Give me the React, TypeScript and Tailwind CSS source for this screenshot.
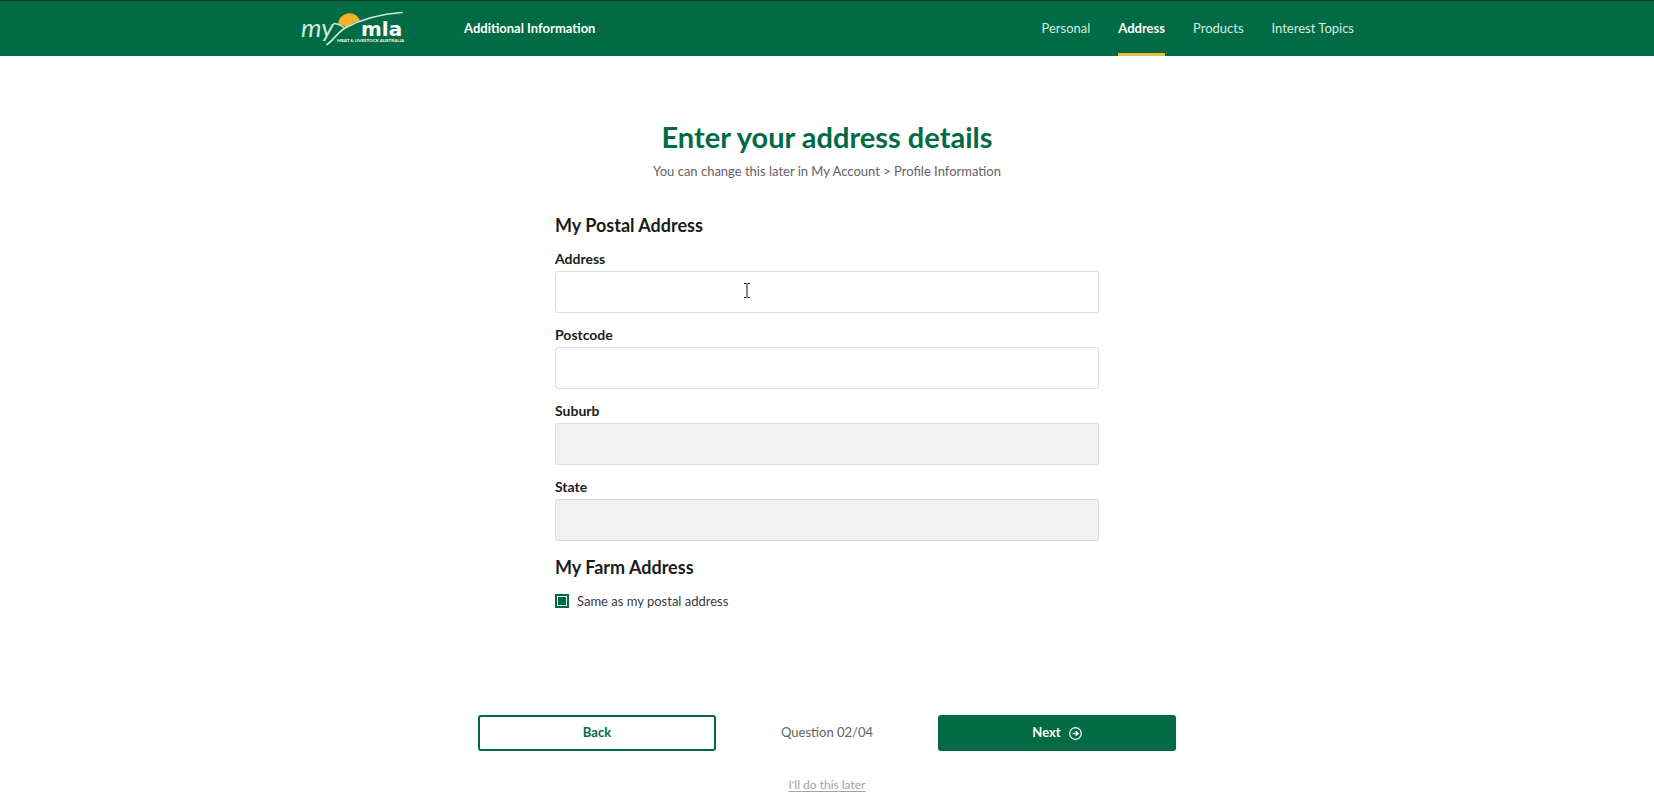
import React from 'react';

const steps = [
  { label: 'Personal', active: false },
  { label: 'Address', active: true },
  { label: 'Products', active: false },
  { label: 'Interest Topics', active: false },
];

const fields = [
  { id: 'address', label: 'Address', disabled: false },
  { id: 'postcode', label: 'Postcode', disabled: false },
  { id: 'suburb', label: 'Suburb', disabled: true },
  { id: 'state', label: 'State', disabled: true },
];

function Logo() {
  return (
    <svg width="106" height="36" viewBox="0 0 106 36" role="img" aria-label="my mla">
      <path d="M38.500 13.500 A11 10 0 0 1 60 9.500 C54 11.500 50 13.500 46.500 16.500 C44 14.500 42 13.500 38.500 13.500 Z" fill="#f3b229" />
      <path d="M34 12.500 C39 13 42 14.500 45 17.500" fill="none" stroke="#cfe9dc" strokeWidth="1.500" strokeLinecap="round" />
      <path d="M27 33.500 C34 29 37 21.500 46 16.500 C62 8 82 3 102 1.500" fill="none" stroke="#cfe9dc" strokeWidth="1.700" strokeLinecap="round" />
      <text x="1" y="26" fontSize="26" fontStyle="italic" fontFamily="Lato, sans-serif" fill="#cfe9dc">my</text>
      <text x="61" y="25" fontSize="20" fontWeight="700" fontFamily="'DejaVu Sans', sans-serif" fill="#ffffff">mla</text>
      <text x="37" y="31" fontSize="4.500" fontWeight="700" fontFamily="Lato, sans-serif" fill="#ffffff">MEAT &amp; LIVESTOCK AUSTRALIA</text>
    </svg>
  );
}

function Header() {
  return (
    <header className="border-t border-[#0a3d28] bg-[#006b45] text-white">
      <div className="mx-auto flex h-[55px] max-w-[1054px] items-stretch justify-between">
        <div className="flex items-center gap-[58px]">
          <a href="#home"><Logo /></a>
          <span className="text-[13px] font-bold">Additional Information</span>
        </div>
        <nav className="flex gap-7 text-[13px]">
          {steps.map((step) => (
            <a
              key={step.label}
              href="#step"
              className={
                step.active
                  ? 'flex items-center border-b-3 border-[#e3c341] pt-[3px] font-bold'
                  : 'flex items-center text-[#d9ece3]'
              }
            >
              {step.label}
            </a>
          ))}
        </nav>
      </div>
    </header>
  );
}

function TextCursor() {
  return (
    <svg className="pointer-events-none absolute top-3 left-[188px]" width="8" height="15" viewBox="0 0 8 15" aria-hidden="true">
      <path d="M1 0.500 H3.500 M4.500 0.500 H7 M1 14.500 H3.500 M4.500 14.500 H7" fill="none" stroke="#111111" />
      <path d="M3.500 1 H4.500 V14 H3.500 Z" fill="#111111" />
    </svg>
  );
}

export default function App() {
  return (
    <div className="min-h-screen bg-white font-['Lato',sans-serif] text-[#1c1c1c]">
      <Header />
      <main className="pt-[63px] pb-2">
        <h1 className="text-center text-[29px] leading-9 font-bold text-[#006b45]">Enter your address details</h1>
        <p className="mt-1.5 text-center text-[13px] leading-5 text-[#636363]">
          You can change this later in My Account &gt; Profile Information
        </p>

        <form>
          <div className="mx-auto max-w-[544px]">
            <h2 className="mt-8 text-lg leading-6 font-bold">My Postal Address</h2>
            <div className="mt-3 flex flex-col gap-3">
              {fields.map((field) => (
                <div key={field.id}>
                  <label htmlFor={field.id} className="mb-0.5 block text-sm leading-5 font-bold">{field.label}</label>
                  <div className="relative">
                    <input
                      id={field.id}
                      type="text"
                      disabled={field.disabled}
                      className="block h-[42px] w-full rounded-[3px] border border-[#dcdcdc] bg-white px-3 text-sm disabled:bg-[#f1f1f1]"
                    />
                    {field.id === 'address' && <TextCursor />}
                  </div>
                </div>
              ))}
            </div>

            <h2 className="mt-3.5 text-lg leading-6 font-bold">My Farm Address</h2>
            <label className="mt-3 flex items-center gap-2 text-[13px] leading-5 text-[#3a3a3a]">
              <input
                type="checkbox"
                defaultChecked
                className="size-3.5 appearance-none border-2 border-[#006b45] bg-white bg-clip-content p-px checked:bg-[#006b45]"
              />
              Same as my postal address
            </label>
          </div>

          <div className="mx-auto mt-26 flex max-w-[698px] items-center justify-between text-[13px]">
            <button type="button" className="h-9 w-[238px] rounded-[3px] border-2 border-[#006b45] bg-white font-bold text-[#006b45]">
              Back
            </button>
            <span className="text-[#636363]">Question 02/04</span>
            <button type="submit" className="flex h-9 w-[238px] items-center justify-center gap-2 rounded-[3px] bg-[#006b45] font-bold text-white">
              Next
              <svg width="13" height="13" viewBox="0 0 13 13" fill="none" stroke="currentColor" strokeWidth="1.200" aria-hidden="true">
                <circle cx="6.500" cy="6.500" r="5.800" />
                <path d="M3.500 6.500 H9 M6.800 4.300 L9 6.500 L6.800 8.700" strokeWidth="1.500" />
              </svg>
            </button>
          </div>
        </form>

        <div className="mt-6 text-center text-xs leading-5">
          <a href="#later" className="text-[#a3a3a3] underline underline-offset-2">I'll do this later</a>
        </div>
      </main>
    </div>
  );
}
